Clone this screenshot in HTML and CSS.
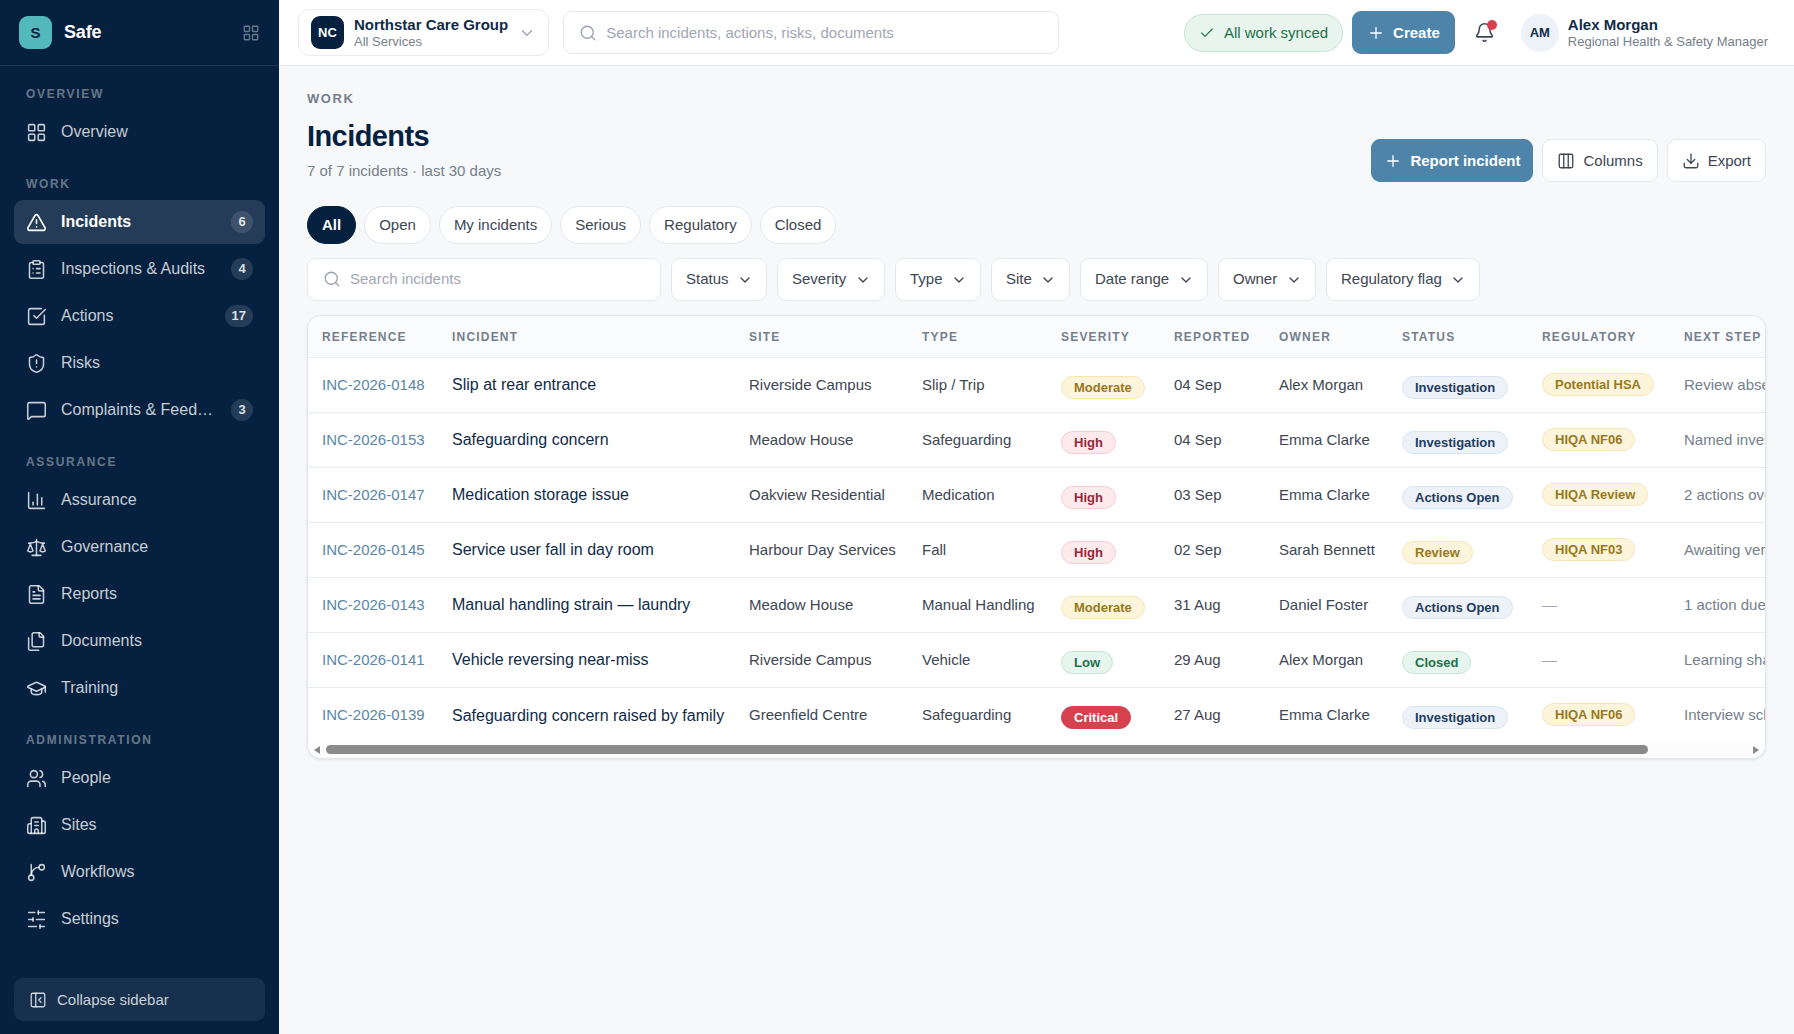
FILE: index.html
```
<!DOCTYPE html>
<html lang="en">
<head>
  <meta charset="UTF-8" />
  <meta name="viewport" content="width=device-width, initial-scale=1.0"/>
  <title>Safe - Incidents</title>
  <link rel="stylesheet" href="styles.css">
</head>

<body>
  <!-- Icon sprite -->
  <svg class="sprite" aria-hidden="true">
    <symbol id="i-grid" viewBox="0 0 24 24"><rect x="3" y="3" width="7" height="7" rx="1"/><rect x="14" y="3" width="7" height="7" rx="1"/><rect x="14" y="14" width="7" height="7" rx="1"/><rect x="3" y="14" width="7" height="7" rx="1"/></symbol>
    <symbol id="i-alert" viewBox="0 0 24 24"><path d="m21.73 18-8-14a2 2 0 0 0-3.48 0l-8 14A2 2 0 0 0 4 21h16a2 2 0 0 0 1.73-3"/><path d="M12 9v4"/><path d="M12 17h.01"/></symbol>
    <symbol id="i-clipboard" viewBox="0 0 24 24"><rect x="8" y="2" width="8" height="4" rx="1"/><path d="M16 4h2a2 2 0 0 1 2 2v14a2 2 0 0 1-2 2H6a2 2 0 0 1-2-2V6a2 2 0 0 1 2-2h2"/><path d="M12 11h4"/><path d="M12 16h4"/><path d="M8 11h.01"/><path d="M8 16h.01"/></symbol>
    <symbol id="i-check-square" viewBox="0 0 24 24"><path d="M21 10.5V19a2 2 0 0 1-2 2H5a2 2 0 0 1-2-2V5a2 2 0 0 1 2-2h12.5"/><path d="m9 11 3 3L22 4"/></symbol>
    <symbol id="i-shield" viewBox="0 0 24 24"><path d="M20 13c0 5-3.5 7.5-7.66 8.95a1 1 0 0 1-.67-.01C7.5 20.5 4 18 4 13V6a1 1 0 0 1 1-1c2 0 4.5-1.2 6.24-2.72a1.17 1.17 0 0 1 1.52 0C14.51 3.81 17 5 19 5a1 1 0 0 1 1 1z"/><path d="M12 8v4"/><path d="M12 16h.01"/></symbol>
    <symbol id="i-message" viewBox="0 0 24 24"><path d="M22 17a2 2 0 0 1-2 2H6.83a2 2 0 0 0-1.42.59l-2.2 2.2A.71.71 0 0 1 2 21.29V5a2 2 0 0 1 2-2h16a2 2 0 0 1 2 2z"/></symbol>
    <symbol id="i-chart" viewBox="0 0 24 24"><path d="M3 3v16a2 2 0 0 0 2 2h16"/><path d="M18 17V9"/><path d="M13 17V5"/><path d="M8 17v-3"/></symbol>
    <symbol id="i-scale" viewBox="0 0 24 24"><path d="m16 16 3-8 3 8c-.87.65-1.92 1-3 1s-2.13-.35-3-1Z"/><path d="m2 16 3-8 3 8c-.87.65-1.92 1-3 1s-2.13-.35-3-1Z"/><path d="M7 21h10"/><path d="M12 3v18"/><path d="M3 7h2c2 0 5-1 7-2 2 1 5 2 7 2h2"/></symbol>
    <symbol id="i-file" viewBox="0 0 24 24"><path d="M15 2H6a2 2 0 0 0-2 2v16a2 2 0 0 0 2 2h12a2 2 0 0 0 2-2V7Z"/><path d="M14 2v4a2 2 0 0 0 2 2h4"/><path d="M10 9H8"/><path d="M16 13H8"/><path d="M16 17H8"/></symbol>
    <symbol id="i-files" viewBox="0 0 24 24"><path d="M20 7h-3a2 2 0 0 1-2-2V2"/><path d="M9 18a2 2 0 0 1-2-2V4a2 2 0 0 1 2-2h7l4 4v10a2 2 0 0 1-2 2Z"/><path d="M3 7.6v12.8A1.6 1.6 0 0 0 4.6 22h9.8"/></symbol>
    <symbol id="i-training" viewBox="0 0 24 24"><path d="M21.42 10.92a1 1 0 0 0-.02-1.84L12.83 5.18a2 2 0 0 0-1.66 0L2.6 9.08a1 1 0 0 0 0 1.83l8.57 3.91a2 2 0 0 0 1.66 0z"/><path d="M22 10v6"/><path d="M6 12.5V16a6 3 0 0 0 12 0v-3.5"/></symbol>
    <symbol id="i-users" viewBox="0 0 24 24"><path d="M16 21v-2a4 4 0 0 0-4-4H6a4 4 0 0 0-4 4v2"/><circle cx="9" cy="7" r="4"/><path d="M22 21v-2a4 4 0 0 0-3-3.87"/><path d="M16 3.13a4 4 0 0 1 0 7.75"/></symbol>
    <symbol id="i-building" viewBox="0 0 24 24"><path d="M10 12h4"/><path d="M10 8h4"/><path d="M14 21v-3a2 2 0 0 0-4 0v3"/><path d="M6 10H4a2 2 0 0 0-2 2v7a2 2 0 0 0 2 2h16a2 2 0 0 0 2-2V9a2 2 0 0 0-2-2h-2"/><path d="M6 21V5a2 2 0 0 1 2-2h8a2 2 0 0 1 2 2v16"/></symbol>
    <symbol id="i-branch" viewBox="0 0 24 24"><path d="M6 3v12"/><circle cx="18" cy="6" r="3"/><circle cx="6" cy="18" r="3"/><path d="M15 6a9 9 0 0 0-9 9"/></symbol>
    <symbol id="i-sliders" viewBox="0 0 24 24"><path d="M21 4h-7"/><path d="M10 4H3"/><path d="M21 12h-9"/><path d="M8 12H3"/><path d="M21 20h-5"/><path d="M12 20H3"/><path d="M14 2v4"/><path d="M8 10v4"/><path d="M16 18v4"/></symbol>
    <symbol id="i-panel" viewBox="0 0 24 24"><rect x="3" y="3" width="18" height="18" rx="2"/><path d="M9 3v18"/><path d="m16 15-3-3 3-3"/></symbol>
    <symbol id="i-chevron" viewBox="0 0 24 24"><path d="m6 9 6 6 6-6"/></symbol>
    <symbol id="i-search" viewBox="0 0 24 24"><circle cx="11" cy="11" r="8"/><path d="m21 21-4.3-4.3"/></symbol>
    <symbol id="i-check" viewBox="0 0 24 24"><path d="M20 6 9 17l-5-5"/></symbol>
    <symbol id="i-plus" viewBox="0 0 24 24"><path d="M5 12h14"/><path d="M12 5v14"/></symbol>
    <symbol id="i-bell" viewBox="0 0 24 24"><path d="M10.27 21a2 2 0 0 0 3.46 0"/><path d="M3.26 15.33A1 1 0 0 0 4 17h16a1 1 0 0 0 .74-1.67C19.41 13.96 18 12.5 18 8A6 6 0 0 0 6 8c0 4.5-1.41 5.96-2.74 7.33"/></symbol>
    <symbol id="i-columns" viewBox="0 0 24 24"><rect x="3" y="3" width="18" height="18" rx="2"/><path d="M9 3v18"/><path d="M15 3v18"/></symbol>
    <symbol id="i-download" viewBox="0 0 24 24"><path d="M21 15v4a2 2 0 0 1-2 2H5a2 2 0 0 1-2-2v-4"/><path d="m7 10 5 5 5-5"/><path d="M12 15V3"/></symbol>
  </svg>

  <div class="app">
    <aside class="sidebar">
      <div class="brand">
        <span class="brand-logo">S</span>
        <span class="brand-name">Safe</span>
        <button class="brand-apps" aria-label="Apps"><svg class="icon icon-md"><use href="#i-grid"/></svg></button>
      </div>

      <nav class="nav">
        <div class="nav-section">
          <h2 class="nav-label">OVERVIEW</h2>
          <a class="nav-item" href="#"><svg class="icon"><use href="#i-grid"/></svg><span class="nav-text">Overview</span></a>
        </div>

        <div class="nav-section">
          <h2 class="nav-label">WORK</h2>
          <a class="nav-item active" href="#"><svg class="icon"><use href="#i-alert"/></svg><span class="nav-text">Incidents</span><span class="nav-count">6</span></a>
          <a class="nav-item" href="#"><svg class="icon"><use href="#i-clipboard"/></svg><span class="nav-text">Inspections &amp; Audits</span><span class="nav-count">4</span></a>
          <a class="nav-item" href="#"><svg class="icon"><use href="#i-check-square"/></svg><span class="nav-text">Actions</span><span class="nav-count">17</span></a>
          <a class="nav-item" href="#"><svg class="icon"><use href="#i-shield"/></svg><span class="nav-text">Risks</span></a>
          <a class="nav-item" href="#"><svg class="icon"><use href="#i-message"/></svg><span class="nav-text">Complaints &amp; Feedback</span><span class="nav-count">3</span></a>
        </div>

        <div class="nav-section">
          <h2 class="nav-label">ASSURANCE</h2>
          <a class="nav-item" href="#"><svg class="icon"><use href="#i-chart"/></svg><span class="nav-text">Assurance</span></a>
          <a class="nav-item" href="#"><svg class="icon"><use href="#i-scale"/></svg><span class="nav-text">Governance</span></a>
          <a class="nav-item" href="#"><svg class="icon"><use href="#i-file"/></svg><span class="nav-text">Reports</span></a>
          <a class="nav-item" href="#"><svg class="icon"><use href="#i-files"/></svg><span class="nav-text">Documents</span></a>
          <a class="nav-item" href="#"><svg class="icon"><use href="#i-training"/></svg><span class="nav-text">Training</span></a>
        </div>

        <div class="nav-section">
          <h2 class="nav-label">ADMINISTRATION</h2>
          <a class="nav-item" href="#"><svg class="icon"><use href="#i-users"/></svg><span class="nav-text">People</span></a>
          <a class="nav-item" href="#"><svg class="icon"><use href="#i-building"/></svg><span class="nav-text">Sites</span></a>
          <a class="nav-item" href="#"><svg class="icon"><use href="#i-branch"/></svg><span class="nav-text">Workflows</span></a>
          <a class="nav-item" href="#"><svg class="icon"><use href="#i-sliders"/></svg><span class="nav-text">Settings</span></a>
        </div>
      </nav>

      <div class="sidebar-footer">
        <button class="collapse"><svg class="icon icon-md"><use href="#i-panel"/></svg>Collapse sidebar</button>
      </div>
    </aside>

    <div class="main">
      <header class="topbar">
        <button class="org">
          <span class="org-logo">NC</span>
          <span class="stack">
            <span class="stack-name">Northstar Care Group</span>
            <span class="stack-sub">All Services</span>
          </span>
          <svg class="icon icon-md org-chevron"><use href="#i-chevron"/></svg>
        </button>

        <label class="search search-global">
          <svg class="icon icon-md"><use href="#i-search"/></svg>
          <input type="search" placeholder="Search incidents, actions, risks, documents" aria-label="Search everything">
        </label>

        <div class="topbar-right">
          <span class="synced"><svg class="icon icon-sm"><use href="#i-check"/></svg>All work synced</span>
          <button class="btn btn-primary"><svg class="icon icon-md"><use href="#i-plus"/></svg>Create</button>
          <button class="bell" aria-label="Notifications"><svg class="icon"><use href="#i-bell"/></svg><span class="bell-dot"></span></button>
          <button class="user">
            <span class="avatar">AM</span>
            <span class="stack">
              <span class="stack-name">Alex Morgan</span>
              <span class="stack-sub">Regional Health &amp; Safety Manager</span>
            </span>
          </button>
        </div>
      </header>

      <main class="page">
        <div class="page-header">
          <div>
            <p class="eyebrow">WORK</p>
            <h1>Incidents</h1>
            <p class="subtitle">7 of 7 incidents · last 30 days</p>
          </div>
          <div class="page-actions">
            <button class="btn btn-primary"><svg class="icon icon-md"><use href="#i-plus"/></svg>Report incident</button>
            <button class="btn"><svg class="icon icon-md"><use href="#i-columns"/></svg>Columns</button>
            <button class="btn"><svg class="icon icon-md"><use href="#i-download"/></svg>Export</button>
          </div>
        </div>

        <div class="tabs">
          <button class="tab active">All</button>
          <button class="tab">Open</button>
          <button class="tab">My incidents</button>
          <button class="tab">Serious</button>
          <button class="tab">Regulatory</button>
          <button class="tab">Closed</button>
        </div>

        <div class="filters">
          <label class="search search-list">
            <svg class="icon icon-md"><use href="#i-search"/></svg>
            <input type="search" placeholder="Search incidents" aria-label="Search incidents">
          </label>
          <select class="filter" aria-label="Status"><option>Status</option></select>
          <select class="filter" aria-label="Severity"><option>Severity</option></select>
          <select class="filter" aria-label="Type"><option>Type</option></select>
          <select class="filter" aria-label="Site"><option>Site</option></select>
          <select class="filter" aria-label="Date range"><option>Date range</option></select>
          <select class="filter" aria-label="Owner"><option>Owner</option></select>
          <select class="filter" aria-label="Regulatory flag"><option>Regulatory flag</option></select>
        </div>

        <div class="table-card">
          <div class="table-scroll">
            <table>
              <colgroup>
                <col class="col-ref"><col class="col-incident"><col class="col-site"><col class="col-type"><col class="col-severity">
                <col class="col-reported"><col class="col-owner"><col class="col-status"><col class="col-regulatory"><col class="col-next">
              </colgroup>
              <thead>
                <tr>
                  <th>REFERENCE</th><th>INCIDENT</th><th>SITE</th><th>TYPE</th><th>SEVERITY</th>
                  <th>REPORTED</th><th>OWNER</th><th>STATUS</th><th>REGULATORY</th><th>NEXT STEP</th>
                </tr>
              </thead>
              <tbody>
                <tr>
                  <td><a class="ref" href="#">INC-2026-0148</a></td>
                  <td class="title">Slip at rear entrance</td>
                  <td>Riverside Campus</td>
                  <td>Slip / Trip</td>
                  <td class="state"><span class="badge amber">Moderate</span></td>
                  <td>04 Sep</td>
                  <td>Alex Morgan</td>
                  <td class="state"><span class="badge blue">Investigation</span></td>
                  <td><span class="badge amber">Potential HSA</span></td>
                  <td class="next">Review absence status</td>
                </tr>
                <tr>
                  <td><a class="ref" href="#">INC-2026-0153</a></td>
                  <td class="title">Safeguarding concern</td>
                  <td>Meadow House</td>
                  <td>Safeguarding</td>
                  <td class="state"><span class="badge red">High</span></td>
                  <td>04 Sep</td>
                  <td>Emma Clarke</td>
                  <td class="state"><span class="badge blue">Investigation</span></td>
                  <td><span class="badge amber">HIQA NF06</span></td>
                  <td class="next">Named investigator</td>
                </tr>
                <tr>
                  <td><a class="ref" href="#">INC-2026-0147</a></td>
                  <td class="title">Medication storage issue</td>
                  <td>Oakview Residential</td>
                  <td>Medication</td>
                  <td class="state"><span class="badge red">High</span></td>
                  <td>03 Sep</td>
                  <td>Emma Clarke</td>
                  <td class="state"><span class="badge blue">Actions Open</span></td>
                  <td><span class="badge amber">HIQA Review</span></td>
                  <td class="next">2 actions overdue</td>
                </tr>
                <tr>
                  <td><a class="ref" href="#">INC-2026-0145</a></td>
                  <td class="title">Service user fall in day room</td>
                  <td>Harbour Day Services</td>
                  <td>Fall</td>
                  <td class="state"><span class="badge red">High</span></td>
                  <td>02 Sep</td>
                  <td>Sarah Bennett</td>
                  <td class="state"><span class="badge amber">Review</span></td>
                  <td><span class="badge amber">HIQA NF03</span></td>
                  <td class="next">Awaiting verification</td>
                </tr>
                <tr>
                  <td><a class="ref" href="#">INC-2026-0143</a></td>
                  <td class="title">Manual handling strain — laundry</td>
                  <td>Meadow House</td>
                  <td>Manual Handling</td>
                  <td class="state"><span class="badge amber">Moderate</span></td>
                  <td>31 Aug</td>
                  <td>Daniel Foster</td>
                  <td class="state"><span class="badge blue">Actions Open</span></td>
                  <td class="none">—</td>
                  <td class="next">1 action due</td>
                </tr>
                <tr>
                  <td><a class="ref" href="#">INC-2026-0141</a></td>
                  <td class="title">Vehicle reversing near-miss</td>
                  <td>Riverside Campus</td>
                  <td>Vehicle</td>
                  <td class="state"><span class="badge green">Low</span></td>
                  <td>29 Aug</td>
                  <td>Alex Morgan</td>
                  <td class="state"><span class="badge green">Closed</span></td>
                  <td class="none">—</td>
                  <td class="next">Learning shared</td>
                </tr>
                <tr>
                  <td><a class="ref" href="#">INC-2026-0139</a></td>
                  <td class="title">Safeguarding concern raised by family</td>
                  <td>Greenfield Centre</td>
                  <td>Safeguarding</td>
                  <td class="state"><span class="badge critical">Critical</span></td>
                  <td>27 Aug</td>
                  <td>Emma Clarke</td>
                  <td class="state"><span class="badge blue">Investigation</span></td>
                  <td><span class="badge amber">HIQA NF06</span></td>
                  <td class="next">Interview scheduled</td>
                </tr>
              </tbody>
            </table>
          </div>
          <div class="scrollbar" aria-hidden="true">
            <svg class="scroll-arrow" viewBox="0 0 6 8"><path d="M6 0v8L0 4z"/></svg>
            <div class="scroll-track"><div class="scroll-thumb"></div></div>
            <svg class="scroll-arrow" viewBox="0 0 6 8"><path d="M0 0v8l6-4z"/></svg>
          </div>
        </div>
      </main>
    </div>
  </div>
</body>
</html>
```
FILE: styles.css
```
* {
  box-sizing: border-box;
}

body {
  margin: 0;
  font-family: "Liberation Sans", Arial, sans-serif;
  font-size: 15px;
  color: #3d4653;
  background: #f7f8fa;
}

button,
input,
select {
  font: inherit;
  color: inherit;
}

button {
  cursor: pointer;
}

h1,
h2,
p {
  margin: 0;
}

a {
  text-decoration: none;
}

.sprite {
  display: none;
}

.icon {
  width: 21px;
  height: 21px;
  flex: none;
  fill: none;
  stroke: currentColor;
  stroke-width: 1.75;
  stroke-linecap: round;
  stroke-linejoin: round;
}

.icon-md {
  width: 18px;
  height: 18px;
}

.icon-sm {
  width: 16px;
  height: 16px;
}

.app {
  display: flex;
  min-height: 100vh;
}

/* Sidebar */
.sidebar {
  width: 279px;
  flex: none;
  display: flex;
  flex-direction: column;
  background: #062140;
  color: #fff;
}

.brand {
  display: flex;
  align-items: center;
  gap: 12px;
  height: 66px;
  padding: 0 19px;
  border-bottom: 1px solid rgba(255, 255, 255, 0.1);
}

.brand-logo {
  display: grid;
  place-items: center;
  width: 33px;
  height: 33px;
  border-radius: 9px;
  background: #53b8bc;
  color: #062140;
  font-weight: 700;
}

.brand-name {
  flex: 1;
  font-size: 18px;
  font-weight: 700;
  letter-spacing: -0.01em;
}

.brand-apps {
  display: flex;
  padding: 0;
  border: 0;
  background: none;
  color: rgba(255, 255, 255, 0.4);
}

.nav {
  flex: 1;
  display: flex;
  flex-direction: column;
  gap: 22px;
  padding: 20px 14px;
}

.nav-section {
  display: flex;
  flex-direction: column;
  gap: 3px;
}

.nav-label {
  margin-bottom: 5px;
  padding-left: 12px;
  font-size: 12px;
  line-height: 16px;
  letter-spacing: 0.14em;
  color: rgba(255, 255, 255, 0.4);
}

.nav-item {
  display: flex;
  align-items: center;
  gap: 14px;
  height: 44px;
  padding: 0 12px;
  border-radius: 9px;
  font-size: 16px;
  color: rgba(255, 255, 255, 0.78);
}

.nav-item:hover {
  background: rgba(255, 255, 255, 0.06);
}

.nav-item.active {
  background: rgba(255, 255, 255, 0.12);
  color: #fff;
  font-weight: 700;
}

.nav-text {
  flex: 1;
  min-width: 0;
  overflow: hidden;
  text-overflow: ellipsis;
  white-space: nowrap;
}

.nav-count {
  min-width: 22px;
  padding: 0 7px;
  border-radius: 11px;
  background: rgba(255, 255, 255, 0.12);
  color: rgba(255, 255, 255, 0.85);
  font-size: 13px;
  font-weight: 700;
  line-height: 22px;
  text-align: center;
}

.sidebar-footer {
  padding: 13px 14px;
}

.collapse {
  display: flex;
  align-items: center;
  gap: 10px;
  width: 100%;
  height: 43px;
  padding: 0 15px;
  border: 0;
  border-radius: 9px;
  background: rgba(255, 255, 255, 0.07);
  color: rgba(255, 255, 255, 0.78);
}

/* Top bar */
.main {
  flex: 1;
  min-width: 0;
  display: flex;
  flex-direction: column;
}

.topbar {
  display: flex;
  align-items: center;
  gap: 14px;
  height: 66px;
  padding: 0 19px;
  background: #fff;
  border-bottom: 1px solid #e4e8ed;
}

.org {
  display: flex;
  align-items: center;
  gap: 10px;
  height: 47px;
  padding: 0 12px;
  border: 1px solid #e8ebf0;
  border-radius: 11px;
  background: #fff;
}

.org-logo {
  display: grid;
  place-items: center;
  width: 33px;
  height: 33px;
  border-radius: 9px;
  background: #062140;
  color: #fff;
  font-size: 13px;
  font-weight: 700;
}

.org-chevron {
  color: #9aa2b1;
}

.stack {
  display: flex;
  flex-direction: column;
  text-align: left;
  white-space: nowrap;
}

.stack-name {
  font-weight: 700;
  line-height: 18px;
  color: #0f2b48;
}

.stack-sub {
  font-size: 13px;
  line-height: 16px;
  color: #74808c;
}

.search {
  display: flex;
  align-items: center;
  gap: 9px;
  height: 43px;
  padding: 0 15px;
  border: 1px solid #e4e8ed;
  border-radius: 9px;
  background: #fff;
  color: #9aa2b1;
}

.search input {
  flex: 1;
  min-width: 0;
  padding: 0;
  border: 0;
  outline: 0;
  background: none;
  color: #3d4653;
}

.search input::placeholder {
  color: #9fa6b4;
}

.search-global {
  flex: 0 1 496px;
}

.topbar-right {
  display: flex;
  align-items: center;
  gap: 9px;
  margin-left: auto;
}

.synced {
  display: flex;
  align-items: center;
  gap: 9px;
  height: 38px;
  padding: 0 14px;
  border: 1px solid #c5e5d4;
  border-radius: 19px;
  background: #e8f5ee;
  color: #22704a;
  white-space: nowrap;
}

.btn {
  display: flex;
  align-items: center;
  gap: 8px;
  height: 43px;
  padding: 0 14px;
  border: 1px solid #e4e8ed;
  border-radius: 9px;
  background: #fff;
  white-space: nowrap;
}

.btn-primary {
  border-color: #4e84a9;
  background: #4e84a9;
  color: #fff;
  font-weight: 700;
}

.page-actions .btn-primary {
  padding: 0 12px;
}

.bell {
  position: relative;
  display: grid;
  place-items: center;
  width: 41px;
  height: 43px;
  padding: 0;
  border: 0;
  background: none;
}

.bell-dot {
  position: absolute;
  top: 9px;
  right: 8px;
  width: 10px;
  height: 10px;
  border-radius: 50%;
  background: #d6414d;
}

.user {
  display: flex;
  align-items: center;
  gap: 9px;
  padding: 0 7px;
  border: 0;
  background: none;
}

.avatar {
  display: grid;
  place-items: center;
  width: 38px;
  height: 38px;
  border-radius: 50%;
  background: #edf2f9;
  color: #0f2b48;
  font-size: 13px;
  font-weight: 700;
}

/* Page */
.page {
  padding: 24px 28px;
}

.page-header {
  display: flex;
  align-items: flex-end;
  justify-content: space-between;
  margin-bottom: 24px;
}

.eyebrow {
  font-size: 13px;
  font-weight: 700;
  line-height: 18px;
  letter-spacing: 0.12em;
  color: #74808c;
}

h1 {
  margin: 10px 0 6px;
  font-size: 29px;
  font-weight: 700;
  line-height: 36px;
  letter-spacing: -0.02em;
  color: #062140;
}

.subtitle {
  line-height: 22px;
  color: #74808c;
}

.page-actions {
  display: flex;
  gap: 9px;
}

.tabs {
  display: flex;
  gap: 8px;
  margin-bottom: 14px;
}

.tab {
  height: 38px;
  padding: 0 14px 2px;
  border: 1px solid #e4e8ed;
  border-radius: 19px;
  background: #fff;
}

.tab.active {
  border-color: #062140;
  background: #062140;
  color: #fff;
  font-weight: 700;
}

.filters {
  display: flex;
  gap: 10px;
  margin-bottom: 14px;
}

.search-list {
  flex: 0 1 354px;
  padding-bottom: 2px;
}

.filter {
  height: 43px;
  padding: 0 37px 2px 14px;
  border: 1px solid #e4e8ed;
  border-radius: 9px;
  appearance: none;
  background: #fff url("data:image/svg+xml,%3csvg xmlns='http://www.w3.org/2000/svg' fill='none' viewBox='0 0 24 24'%3e%3cpath stroke='%233d4653' stroke-linecap='round' stroke-linejoin='round' stroke-width='2' d='m6 9 6 6 6-6'/%3e%3c/svg%3e") no-repeat right 13px center / 16px;
  cursor: pointer;
}

/* Incident table */
.table-card {
  border: 1px solid #e1e5eb;
  border-radius: 14px;
  background: #fff;
  box-shadow: 0 1px 3px rgba(5, 32, 63, 0.1);
  overflow: hidden;
}

.table-scroll {
  overflow-x: auto;
  scrollbar-width: none;
}

table {
  width: 1570px;
  table-layout: fixed;
  border-collapse: separate;
  border-spacing: 0;
}

.col-ref { width: 130px; }
.col-incident { width: 297px; }
.col-site { width: 173px; }
.col-type { width: 139px; }
.col-severity { width: 113px; }
.col-reported { width: 105px; }
.col-owner { width: 123px; }
.col-status { width: 140px; }
.col-regulatory { width: 142px; }
.col-next { width: 208px; }

th {
  height: 42px;
  padding: 0 14px;
  border-bottom: 1px solid #e8ebf0;
  background: #fafbfd;
  color: #74808c;
  font-size: 12px;
  letter-spacing: 0.1em;
  text-align: left;
  white-space: nowrap;
}

td {
  height: 55px;
  padding: 0 14px 2px;
  border-bottom: 1px solid #e8ebf0;
  white-space: nowrap;
}

tbody tr:last-child td {
  border-bottom: 0;
}

tbody tr:hover td {
  background: #fafbfd;
}

.ref {
  color: #5a86a8;
}

.title {
  padding-bottom: 0;
  font-size: 16px;
  color: #0f2b48;
}

.next {
  color: #74808c;
}

.none {
  color: #9fa6b4;
}

.badge {
  display: inline-block;
  padding: 0 12px;
  border: 1px solid;
  border-radius: 12px;
  font-size: 13px;
  font-weight: 700;
  line-height: 21px;
  vertical-align: middle;
}

.state {
  padding-top: 4px;
  padding-bottom: 0;
}

.amber {
  background: #fdf4dc;
  border-color: #f7e6b5;
  color: #97791c;
}

.red {
  background: #fceaec;
  border-color: #f6ccd1;
  color: #96293a;
}

.blue {
  background: #edf2f9;
  border-color: #dbe5f1;
  color: #1d3d61;
}

.green {
  background: #e6f5ed;
  border-color: #c5e5d4;
  color: #22704a;
}

.critical {
  background: #d6414d;
  border-color: #d6414d;
  color: #fff;
}

.scrollbar {
  display: flex;
  align-items: center;
  gap: 6px;
  height: 15px;
  padding: 0 6px 2px;
  background: #fcfcfc;
}

.scroll-arrow {
  width: 6px;
  height: 8px;
  flex: none;
  fill: #8a8a8a;
}

.scroll-track {
  flex: 1;
}

.scroll-thumb {
  width: 93%;
  height: 9px;
  border-radius: 5px;
  background: #8a8a8a;
}
```
